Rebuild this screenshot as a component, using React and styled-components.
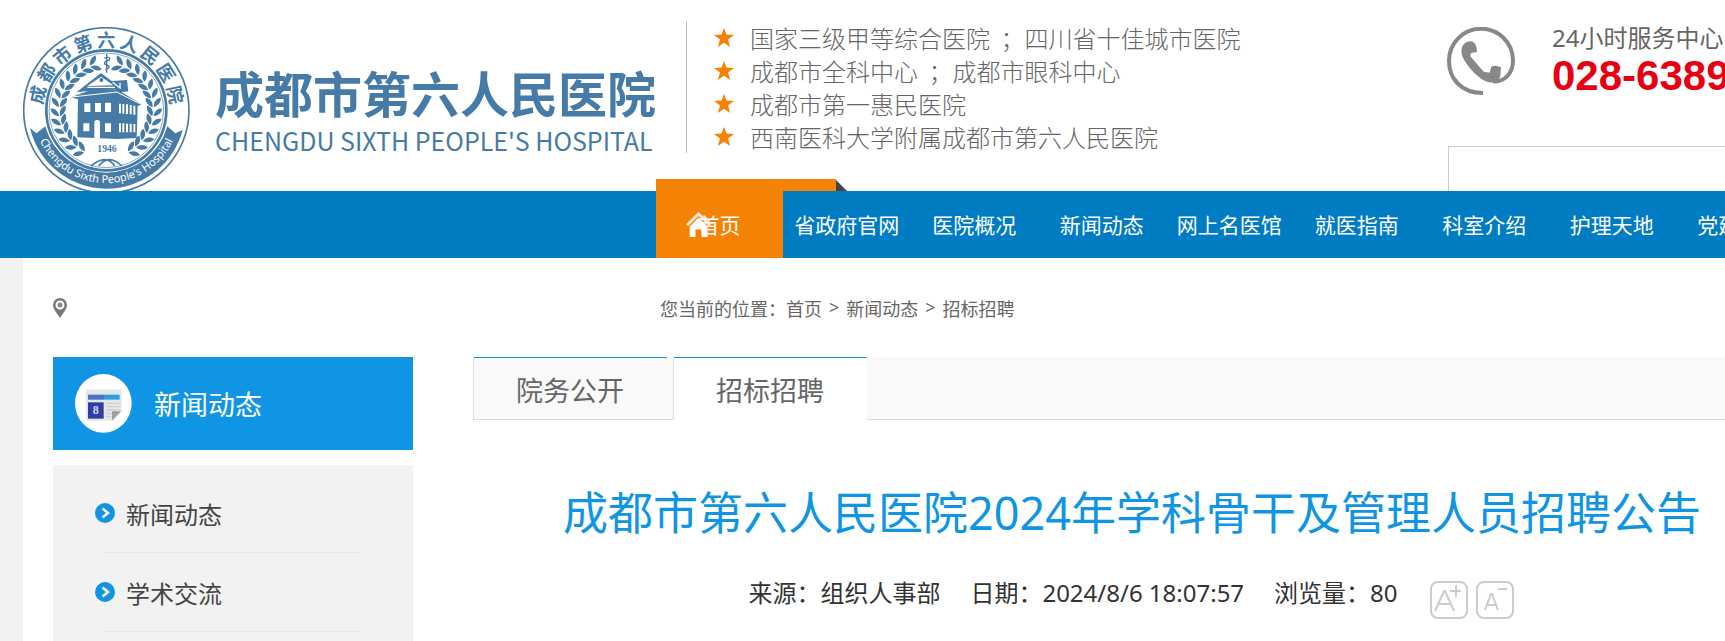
import React from "react";
import styled, { createGlobalStyle } from "styled-components";

const GlobalStyle = createGlobalStyle`
	* {
		box-sizing: border-box;
	}
	body {
		margin: 0;
		overflow: hidden;
		background: #fff;
		color: #666;
		font-family: "Noto Sans", "Noto Sans CJK SC", sans-serif;
	}
	ul, h1, h2, p {
		margin: 0;
		padding: 0;
		font-weight: 400;
	}
	ul {
		list-style: none;
	}
	a {
		color: inherit;
		text-decoration: none;
	}
	svg {
		display: block;
		flex: none;
	}
`;

const honors = [
	"国家三级甲等综合医院 \u00a0；四川省十佳城市医院",
	"成都市全科中心 \u00a0；成都市眼科中心",
	"成都市第一惠民医院",
	"西南医科大学附属成都市第六人民医院",
];

const navItems = [
	"首页",
	"省政府官网",
	"医院概况",
	"新闻动态",
	"网上名医馆",
	"就医指南",
	"科室介绍",
	"护理天地",
	"党建工作",
];

const sideItems = ["新闻动态", "学术交流"];

const tabs = [
	{ label: "院务公开", active: false },
	{ label: "招标招聘", active: true },
];

// pairs of leaves going down both sides of the wreath
const leaves = [];
for (let deg = 19; deg <= 154; deg += 11) {
	[1, -1].forEach((side) => leaves.push({ deg: deg * side, side }));
}

function Emblem() {
	return (
		<svg width="167" height="167" viewBox="69 81 501 501" fill="#457ba6">
			<circle cx="319" cy="331" r="248" fill="#fff" stroke="#457ba6" strokeWidth="5" />
			<path d="M90 384 L109 400 L136 379 A190 190 0 0 0 502 379 L526 400 L548 390 A236 236 0 0 1 90 384 Z" />
			<circle cx="319" cy="331" r="180" fill="#fff" stroke="#457ba6" strokeWidth="8" />
			<circle cx="319" cy="331" r="172" fill="none" stroke="#457ba6" strokeWidth="2" />
			{"成都市第六人民医院".split("").map((char, i) => (
				<text
					key={char}
					x="319"
					y="140"
					textAnchor="middle"
					fontSize="54"
					fontWeight="700"
					fontFamily="Noto Sans CJK SC"
					transform={`rotate(${(i - 4) * 19.3} 319 331)`}
				>
					{char}
				</text>
			))}
			<path id="band" d="M104 376 A220 220 0 0 0 534 376" fill="none" />
			<text fill="#fff" fontSize="33" fontFamily="Noto Sans" textAnchor="middle">
				<textPath href="#band" startOffset="50%">
					Chengdu Sixth People's Hospital
				</textPath>
			</text>
			{leaves.map(({ deg, side }) => (
				<g key={deg} transform={`rotate(${deg} 319 331) translate(319 187) scale(${side} 1)`}>
					<path d="M3 1 C-2 -20 -18 -22 -23 -22 C-23 -8 -12 1 3 1Z" />
					<path d="M3 5 C-4 20 -16 26 -27 23 C-23 9 -12 2 3 5Z" />
				</g>
			))}
			<path
				d="M273 498 Q318 460 344 498 M366 498 Q326 460 296 498"
				fill="none"
				stroke="#457ba6"
				strokeWidth="5"
			/>
			<path
				d="M320 162 V218 M313 174 Q334 168 328 180 Q310 184 314 192 Q332 198 326 204 L316 210"
				fill="none"
				stroke="#457ba6"
				strokeWidth="4"
			/>
			{/* the old hospital building */}
			<path d="M303 219 L230 276 L345 268 L350 278 L385 274 L381 240 L335 243 Z" />
			<path d="M303 230 L262 258 L340 256 Z" fill="#fff" />
			<circle cx="304" cy="240" r="6" />
			<path d="M262 262 L345 262 M338 247 L360 264 L360 248" stroke="#fff" strokeWidth="4" fill="none" />
			<path d="M213 292 L272 270 L350 268 L425 313 L413 319 L410 414 L352 417 L232 412 L234 298 Z" />
			<path d="M215 291 L350 276 L421 312" fill="none" stroke="#fff" strokeWidth="3" />
			<path
				d="M253 310 h18 v26 h-18Z M285 309 h18 v27 h-18Z M315 308 h18 v28 h-18Z M250 370 h18 v24 h-18Z M315 370 h18 v26 h-18Z M283 414 V364 Q291 354 300 364 V414Z"
				fill="#fff"
			/>
			<path
				d="M360 311 V340 M370 312 V341 M381 313 V342 M392 315 V343 M403 317 V344 M360 370 V397 M370 370 V397 M381 371 V397 M392 371 V397 M403 372 V397"
				stroke="#fff"
				strokeWidth="6"
			/>
			<text x="321" y="456" fontSize="29" fontFamily="Liberation Serif" fontWeight="700" textAnchor="middle">
				1946
			</text>
		</svg>
	);
}

function PhoneIcon() {
	return (
		<svg width="68" height="68" viewBox="0 0 204 204" fill="#888">
			<path
				d="M108 198 C40 198 6 152 6 102 A96 96 0 0 1 198 100 C198 140 172 166 138 163"
				fill="none"
				stroke="#888"
				strokeWidth="12"
			/>
			<path d="M68 43 C50 45 41 60 44 80 C50 108 92 152 116 163 C140 173 156 162 160 146 L162 121 Q146 112 133 119 L128 137 L110 134 L70 88 L72 78 L90 75 Q90 58 82 48 Q76 42 68 43Z" />
		</svg>
	);
}

function HouseIcon() {
	return (
		<svg width="25" height="25" viewBox="0 0 74 74" fill="#fff">
			<path d="M3 39 L37 6 L71 39" fill="none" stroke="#fff" strokeWidth="9" opacity="0.8" />
			<path d="M37 17 L64 43 V74 H46 V52 H28 V74 H11 V43 Z" />
		</svg>
	);
}

function NewsIcon() {
	return (
		<svg width="57" height="59" viewBox="0 0 171 177">
			<ellipse cx="85" cy="88" rx="85" ry="88" fill="#fff" />
			<path
				d="M33 44 l6 5 6 -5 6 5 6 -5 6 5 6 -5 6 5 6 -5 6 5 6 -5 6 5 6 -5 6 5 6 -5 6 5 6 -5 5 5 6 -5 V112 L112 140 H33 Z"
				fill="#e6e6e6"
			/>
			<path d="M39 62 H87 V77 H39Z" fill="#4c74c4" />
			<path d="M87 62 H134 V77 H87Z" fill="#2b9fe2" />
			<path d="M39 85 H86 V134 H39Z" fill="#303f9f" />
			<text x="62" y="121" fontSize="36" fontWeight="700" fontFamily="Liberation Serif" fill="#cdd5f5" textAnchor="middle">
				8
			</text>
			<path d="M94 88 H134 M94 98 H134 M94 108 H134 M94 118 H108 M94 128 H108" stroke="#cfcfcf" strokeWidth="4" />
			<path d="M111 112 H138 L111 140Z" fill="#9e9e9e" />
		</svg>
	);
}

function App() {
	return (
		<Page>
			<GlobalStyle />
			<Header>
				<Emblem />
				<Brand>
					<BrandName>成都市第六人民医院</BrandName>
					<BrandEnglish>CHENGDU SIXTH PEOPLE'S HOSPITAL</BrandEnglish>
				</Brand>
				<Honors>
					{honors.map((honor) => (
						<li key={honor}>
							<svg width="20" height="19" viewBox="0 0 20 19" fill="#f48204">
								<path d="M10 0 L12.5 6.6 L20 7 L14 11.4 L16.2 19 L10 14.7 L3.8 19 L6 11.4 L0 7 L7.5 6.6Z" />
							</svg>
							{honor}
						</li>
					))}
				</Honors>
				<Contact>
					<Hotline>
						<PhoneIcon />
						<div>
							<p>24小时服务中心</p>
							<strong>028-6389</strong>
						</div>
					</Hotline>
					<SearchInput aria-label="搜索" />
				</Contact>
			</Header>
			<Nav>
				{navItems.map((item, i) => (
					<NavLink key={item} href="#" $home={i === 0}>
						{i === 0 && <HouseIcon />}
						{item}
					</NavLink>
				))}
			</Nav>
			<Body>
				<Crumbs>
					<svg width="14" height="20" viewBox="0 0 14 20">
						<path d="M7 0 A7 7 0 0 1 14 7 C14 11 10 15 7 20 C4 15 0 11 0 7 A7 7 0 0 1 7 0Z" fill="#777" />
						<circle cx="7" cy="7" r="3.5" fill="#888" stroke="#fff" strokeWidth="2" />
					</svg>
					<CrumbTrail>
						<span>您当前的位置：<a href="#">首页</a></span>
						<span>&gt;</span>
						<a href="#">新闻动态</a>
						<span>&gt;</span>
						<a href="#">招标招聘</a>
					</CrumbTrail>
				</Crumbs>
				<Columns>
					<aside>
						<SideTitle>
							<NewsIcon />
							新闻动态
						</SideTitle>
						<SideList>
							{sideItems.map((item) => (
								<li key={item}>
									<a href="#">
										<svg width="20" height="20" viewBox="0 0 20 20">
											<circle cx="10" cy="10" r="10" fill="#0f95e3" />
											<path d="M7.500 5.500 L13 10 L7.500 14.500" fill="none" stroke="#fff" strokeWidth="2.500" />
										</svg>
										{item}
									</a>
								</li>
							))}
						</SideList>
					</aside>
					<Article>
						<TabBar>
							{tabs.map((tab) => (
								<Tab key={tab.label} $active={tab.active}>
									{tab.label}
								</Tab>
							))}
						</TabBar>
						<Title>成都市第六人民医院2024年学科骨干及管理人员招聘公告</Title>
						<Meta>
							<span>来源：组织人事部</span>
							<span>日期：2024/8/6 18:07:57</span>
							<span>浏览量：80</span>
							<ZoomButtons>
								<SizeButton aria-label="放大字体">
									<svg width="38" height="39" viewBox="0 0 38 39">
										<rect x="1" y="1" width="36" height="36" rx="7" />
										<path d="M5 30 L14 10 H15 L24 30 M8 23 H21 M20 10 H31 M26 4 V16" />
									</svg>
								</SizeButton>
								<SizeButton aria-label="缩小字体">
									<svg width="38" height="39" viewBox="0 0 38 39">
										<rect x="1" y="1" width="36" height="36" rx="7" />
										<path d="M9 29 L15 13 H16 L22 29 M11 24 H20 M22 8 H31" />
									</svg>
								</SizeButton>
							</ZoomButtons>
						</Meta>
					</Article>
				</Columns>
			</Body>
		</Page>
	);
}

const Page = styled.div`
	min-width: 1816px;
`;

const Header = styled.header`
	display: flex;
	align-items: flex-start;
	height: 191px;
	padding: 27px 0 0 23px;
	overflow: hidden;
`;

const Brand = styled.div`
	margin-left: 25px;
	padding-top: 34px;
	width: 441px;
	white-space: nowrap;
	color: #457ba6;
	font-family: "Noto Sans CJK SC", sans-serif;
`;

const BrandName = styled.div`
	font-size: 49px;
	font-weight: 700;
	line-height: 62px;
`;

const BrandEnglish = styled.div`
	font-size: 25px;
	line-height: 34px;
`;

const Honors = styled.ul`
	margin: -6px 0 0 30px;
	padding-left: 27px;
	border-left: 1px solid #bbb;
	width: 761px;
	font-family: "Noto Sans CJK SC", sans-serif;
	font-weight: 300;
	font-size: 24px;
	line-height: 33px;
	li {
		display: flex;
		align-items: center;
		gap: 16px;
	}
`;

const Contact = styled.div`
	flex: 1;
`;

const Hotline = styled.div`
	display: flex;
	gap: 37px;
	height: 119px;
	p {
		margin-top: -6px;
		font-size: 24px;
		line-height: 34px;
	}
	strong {
		display: block;
		color: #e60012;
		font: 700 42px/42px "Liberation Sans", sans-serif;
	}
`;

const SearchInput = styled.input`
	display: block;
	width: 100%;
	height: 60px;
	margin-left: 1px;
	border: 1px solid #ccc;
	outline: none;
`;

const Nav = styled.nav`
	display: flex;
	padding: 0 13px 0 656px;
	background: #007cc3;
	height: 67px;
`;

const NavLink = styled.a`
	flex: ${(props) => (props.$home ? "none" : "1")};
	position: relative;
	width: 127px;
	height: 67px;
	background: ${(props) => (props.$home ? "#f48204" : "none")};
	color: #fff;
	font-size: 21px;
	line-height: 69px;
	text-align: center;
	svg {
		position: absolute;
		left: 30px;
		top: 21px;
	}
	/* the folded ribbon that sticks out above the bar */
	&::before {
		content: ${(props) => (props.$home ? '""' : "none")};
		position: absolute;
		left: 0;
		bottom: 100%;
		width: 180px;
		height: 12px;
		background: #f48204;
	}
	&::after {
		content: ${(props) => (props.$home ? '""' : "none")};
		position: absolute;
		left: 180px;
		bottom: 100%;
		border-left: 11px solid #444;
		border-top: 11px solid transparent;
	}
`;

const Body = styled.main`
	border-left: 23px solid #f2f2f2;
	padding: 0 25px 0 30px;
	min-height: 400px;
`;

const Crumbs = styled.div`
	display: flex;
	align-items: center;
	height: 99px;
`;

const CrumbTrail = styled.div`
	display: flex;
	gap: 7px;
	margin-left: 593px;
	font-size: 18px;
`;

const Columns = styled.div`
	display: grid;
	grid-template-columns: 360px 1fr;
	gap: 60px;
`;

const SideTitle = styled.h2`
	display: flex;
	align-items: center;
	gap: 22px;
	height: 93px;
	padding-left: 22px;
	background: #0f95e3;
	color: #fff;
	font-size: 27px;
`;

const SideList = styled.ul`
	margin-top: 15px;
	padding: 9px 42px 40px;
	background: #f2f2f2;
	color: #444;
	font-size: 24px;
	a {
		display: flex;
		align-items: center;
		gap: 11px;
		height: 78px;
	}
	li::after {
		content: "";
		display: block;
		height: 1px;
		margin: 0 12px 0 9px;
		background: #e6e6e6;
	}
`;

const Article = styled.article`
	min-width: 0;
`;

const TabBar = styled.div`
	display: flex;
	height: 63px;
	background: #f9f9f9;
	border-bottom: 1px solid #ddd;
`;

const Tab = styled.button`
	position: relative;
	width: ${(props) => (props.$active ? "193px" : "201px")};
	height: 63px;
	padding: 2px 0 0 42px;
	border: 0;
	border-left: ${(props) => (props.$active ? "0" : "1px solid #ddd")};
	border-right: ${(props) => (props.$active ? "0" : "1px solid #ddd")};
	border-bottom: 1px solid ${(props) => (props.$active ? "#fff" : "#ddd")};
	background: ${(props) => (props.$active ? "#fff" : "#f9f9f9")};
	color: #666;
	font: inherit;
	font-size: 27px;
	text-align: left;
	&::before {
		content: "";
		position: absolute;
		left: 0;
		top: 0;
		width: 193px;
		height: 1px;
		background: #0f95e3;
	}
`;

const Title = styled.h1`
	margin-top: 60px;
	color: #0f95e3;
	font-size: 45px;
	line-height: 66px;
	text-align: center;
	white-space: nowrap;
`;

const Meta = styled.div`
	display: flex;
	justify-content: center;
	align-items: flex-start;
	gap: 30px;
	height: 42px;
	margin-top: 32px;
	padding-right: 2px;
	color: #333;
	font-size: 24px;
	line-height: 30px;
	white-space: nowrap;
`;

const ZoomButtons = styled.div`
	display: flex;
	gap: 8px;
	padding: 3px 0 0 2px;
`;

const SizeButton = styled.button`
	padding: 0;
	border: 0;
	background: none;
	svg {
		fill: none;
		stroke: #ccc;
		stroke-width: 2px;
	}
`;

export default App;
